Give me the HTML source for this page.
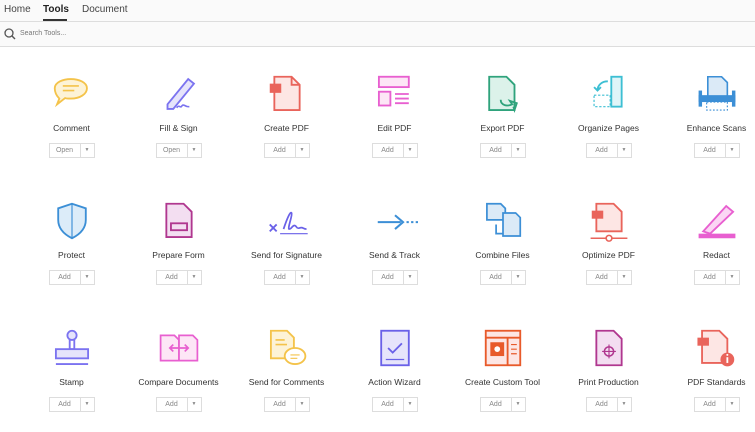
<!DOCTYPE html><html><head><style>
body{margin:0;width:755px;height:432px;background:#fff;font-family:"Liberation Sans",sans-serif;overflow:hidden;position:relative}
.tab{position:absolute;top:4px;font-size:10px;color:#444}
.t{position:absolute;width:107px;text-align:center}
.t svg{display:block;margin:0 auto}
.lb{font-size:8.5px;color:#333;margin-top:7px;white-space:nowrap}
.bt{margin:10px auto 0;width:44px;height:13px;border:1px solid #ddd;display:flex;font-size:7px;color:#888;line-height:13px}
.bt span:first-child{flex:1;border-right:1px solid #ddd}
.bt span:last-child{width:13px;font-size:5px}
</style></head><body>
<div style="position:absolute;left:0;top:0;width:755px;height:46px;background:#fafafa"></div>
<div class="tab" style="left:4px">Home</div>
<div class="tab" style="left:43px;font-weight:bold;color:#222">Tools</div>
<div style="position:absolute;left:43px;top:19px;width:24px;height:2px;background:#333"></div>
<div class="tab" style="left:82px">Document</div>
<div style="position:absolute;left:0;top:21px;width:755px;height:1px;background:#ddd"></div>
<svg style="position:absolute;left:4px;top:28px" width="12" height="12"><circle cx="5" cy="5" r="4" fill="none" stroke="#555" stroke-width="1.3"/><line x1="8" y1="8" x2="11" y2="11" stroke="#555" stroke-width="1.4"/></svg>
<div style="position:absolute;left:20px;top:30px;font-size:7px;color:#777">Search Tools...</div>
<div style="position:absolute;left:0;top:46px;width:755px;height:1px;background:#ddd"></div>
<div id="g"></div>
<script>
const I={
c:'<path d="M4 8c0-5 7-8 14-8s14 3 14 8-6 9-14 9c-2 0-4 0-5-.5L6 22l2-5c-2-2-4-5-4-9z" transform="translate(1,6)" fill="#fdf3d6" stroke="#f4c34a" stroke-width="1.6"/><path d="M12 12h14M12 16h10" stroke="#f4c34a" stroke-width="1.4"/>',
f:'<path d="M10 28l18-22 5 4-18 22H10z" fill="#e6e4fb" stroke="#7b73f0" stroke-width="1.6"/><path d="M18 31c2-3 3 0 4-1s1-2 3-1 2 1 4 1" fill="none" stroke="#7b73f0" stroke-width="1.4"/>',
p:'<path d="M9 4h15l7 7v22H9z" fill="#fde6e4" stroke="#e9645b" stroke-width="1.6"/><path d="M24 4v7h7" fill="none" stroke="#e9645b" stroke-width="1.6"/><rect x="5" y="10" width="10" height="8" fill="#e9645b"/>',
e:'<rect x="6" y="4" width="26" height="9" fill="#fde6f6" stroke="#e85fd0" stroke-width="1.6"/><rect x="6" y="17" width="10" height="12" fill="#fde6f6" stroke="#e85fd0" stroke-width="1.6"/><path d="M20 19h12M20 23h12M20 27h12" stroke="#e85fd0" stroke-width="1.6"/>',
x:'<path d="M8 4h15l7 7v22H8z" fill="#dcf2ea" stroke="#2fa37c" stroke-width="1.6"/><path d="M18 24c0 5 6 6 10 4l-2-3 6 2-2 6-1-3" fill="none" stroke="#2fa37c" stroke-width="1.6"/>',
o:'<rect x="22" y="4" width="9" height="26" fill="#e0f5f8" stroke="#3dbfd3" stroke-width="1.6"/><rect x="7" y="20" width="14" height="10" fill="none" stroke="#3dbfd3" stroke-dasharray="2 1.5"/><path d="M19 8c-5 0-9 3-9 8M7 13l3 3 3-3" fill="none" stroke="#3dbfd3" stroke-width="1.6"/>',
s:'<path d="M12 4h12l5 5v14H12z" fill="#dbeaf7" stroke="#3c8fd6" stroke-width="1.4"/><rect x="4" y="20" width="32" height="6" fill="#3c8fd6"/><rect x="4" y="16" width="3" height="14" fill="#3c8fd6"/><rect x="33" y="16" width="3" height="14" fill="#3c8fd6"/><rect x="11" y="26" width="18" height="7" fill="none" stroke="#3c8fd6" stroke-dasharray="1.5 1.5"/>',
pr:'<path d="M20 4l12 4v10c0 8-6 13-12 16-6-3-12-8-12-16V8z" fill="#dcecf9" stroke="#3c8fd6" stroke-width="1.6"/><path d="M20 4v30" stroke="#3c8fd6" stroke-width="1"/>',
pf:'<path d="M9 4h15l7 7v22H9z" fill="#f3def1" stroke="#b0378f" stroke-width="1.6"/><rect x="13" y="21" width="14" height="6" fill="none" stroke="#b0378f" stroke-width="1.6"/>',
sg:'<path d="M5 22l6 6M11 22l-6 6" stroke="#6a61e8" stroke-width="1.6"/><path d="M17 26c3-9 6-16 7-14s-4 14-2 14 3-4 5-3 1 3 4 2 3 1 6 1" fill="none" stroke="#6a61e8" stroke-width="1.5"/><path d="M14 30h24" stroke="#6a61e8"/>',
st:'<path d="M5 20h20M20 14l7 6-7 6" fill="none" stroke="#3c8fd6" stroke-width="1.8"/><path d="M30 20h2M34 20h2M38 20h2" stroke="#3c8fd6" stroke-width="1.8"/>',
cf:'<path d="M6 4h12l4 4v10H6z" fill="#dbeaf7" stroke="#3c8fd6" stroke-width="1.5"/><path d="M20 12h11l4 4v16H20z" fill="#dbeaf7" stroke="#3c8fd6" stroke-width="1.5"/><path d="M14 22v8h6" fill="none" stroke="#3c8fd6" stroke-width="1.5"/>',
op:'<path d="M9 4h15l7 7v17H9z" fill="#fde6e4" stroke="#e9645b" stroke-width="1.6"/><rect x="5" y="10" width="10" height="7" fill="#e9645b"/><path d="M4 34h32" stroke="#e9645b" stroke-width="1.4"/><circle cx="20" cy="34" r="2.5" fill="#fff" stroke="#e9645b" stroke-width="1.4"/>',
r:'<path d="M8 28L28 6l6 5-20 19z" fill="#fbd6f4" stroke="#e85fd0" stroke-width="1.6"/><rect x="4" y="30" width="32" height="4" fill="#e85fd0"/>',
sp:'<circle cx="20" cy="8" r="4" fill="#e6e4fb" stroke="#7b73f0" stroke-width="1.6"/><path d="M18 12v8h4v-8" fill="none" stroke="#7b73f0" stroke-width="1.6"/><rect x="6" y="20" width="28" height="8" fill="#e6e4fb" stroke="#7b73f0" stroke-width="1.6"/><path d="M6 33h28" stroke="#7b73f0" stroke-width="1.6"/>',
cd:'<path d="M4 8h12l4 4v18H4z" fill="#fde6f6" stroke="#e85fd0" stroke-width="1.5"/><path d="M20 8h12l4 4v18H20z" fill="#fde6f6" stroke="#e85fd0" stroke-width="1.5"/><path d="M12 19h16M15 16l-3 3 3 3M25 16l3 3-3 3" fill="none" stroke="#e85fd0" stroke-width="1.5"/>',
sc:'<path d="M6 4h14l6 6v18H6z" fill="#fdf3d6" stroke="#f4c34a" stroke-width="1.6"/><path d="M10 12h8M10 16h10" stroke="#f4c34a" stroke-width="1.4"/><ellipse cx="27" cy="26" rx="9" ry="7" fill="#fff" stroke="#f4c34a" stroke-width="1.6"/><path d="M23 25h8M23 28h6" stroke="#f4c34a"/>',
aw:'<rect x="8" y="4" width="24" height="30" fill="#e6e4fb" stroke="#6a61e8" stroke-width="1.6"/><path d="M14 19l4 4 8-8" fill="none" stroke="#6a61e8" stroke-width="1.6"/><path d="M12 29h16" stroke="#6a61e8"/>',
ct:'<rect x="5" y="4" width="30" height="30" fill="#fde6e4" stroke="#e85a2a" stroke-width="1.6"/><path d="M5 10h30M24 10v24" stroke="#e85a2a" stroke-width="1.6"/><rect x="9" y="14" width="12" height="12" fill="#e85a2a"/><circle cx="15" cy="20" r="2.5" fill="#fff"/><path d="M27 16h5M27 20h5M27 24h5" stroke="#e85a2a"/>',
pp:'<path d="M9 4h15l7 7v23H9z" fill="#f3def1" stroke="#b0378f" stroke-width="1.6"/><circle cx="20" cy="22" r="4" fill="none" stroke="#b0378f" stroke-width="1.3"/><path d="M20 16v12M14 22h12" stroke="#b0378f"/>',
ps:'<path d="M7 4h15l7 7v21H7z" fill="#fde6e4" stroke="#e9645b" stroke-width="1.6"/><rect x="3" y="10" width="10" height="7" fill="#e9645b"/><circle cx="29" cy="29" r="6" fill="#e9645b"/><path d="M29 27v5" stroke="#fff" stroke-width="1.6"/><circle cx="29" cy="25" r=".9" fill="#fff"/>'
};
const D=[[['c','Comment','Open'],['f','Fill & Sign','Open'],['p','Create PDF'],['e','Edit PDF'],['x','Export PDF'],['o','Organize Pages'],['s','Enhance Scans']],
[['pr','Protect'],['pf','Prepare Form'],['sg','Send for Signature'],['st','Send & Track'],['cf','Combine Files'],['op','Optimize PDF'],['r','Redact']],
[['sp','Stamp'],['cd','Compare Documents'],['sc','Send for Comments'],['aw','Action Wizard'],['ct','Create Custom Tool'],['pp','Print Production'],['ps','PDF Standards']]];
const cx=[71,178,286,394,502,608,716];let h='';
D.forEach((row,ri)=>row.forEach((t,ci)=>{h+=`<div class="t" style="left:${cx[ci]-53}px;top:${72+ri*127}px"><svg width="46" height="44" viewBox="0 0 40 38">${I[t[0]]}</svg><div class="lb">${t[1]}</div><div class="bt"><span>${t[2]||'Add'}</span><span>▼</span></div></div>`}));
document.getElementById('g').innerHTML=h;
</script>
</body></html>
